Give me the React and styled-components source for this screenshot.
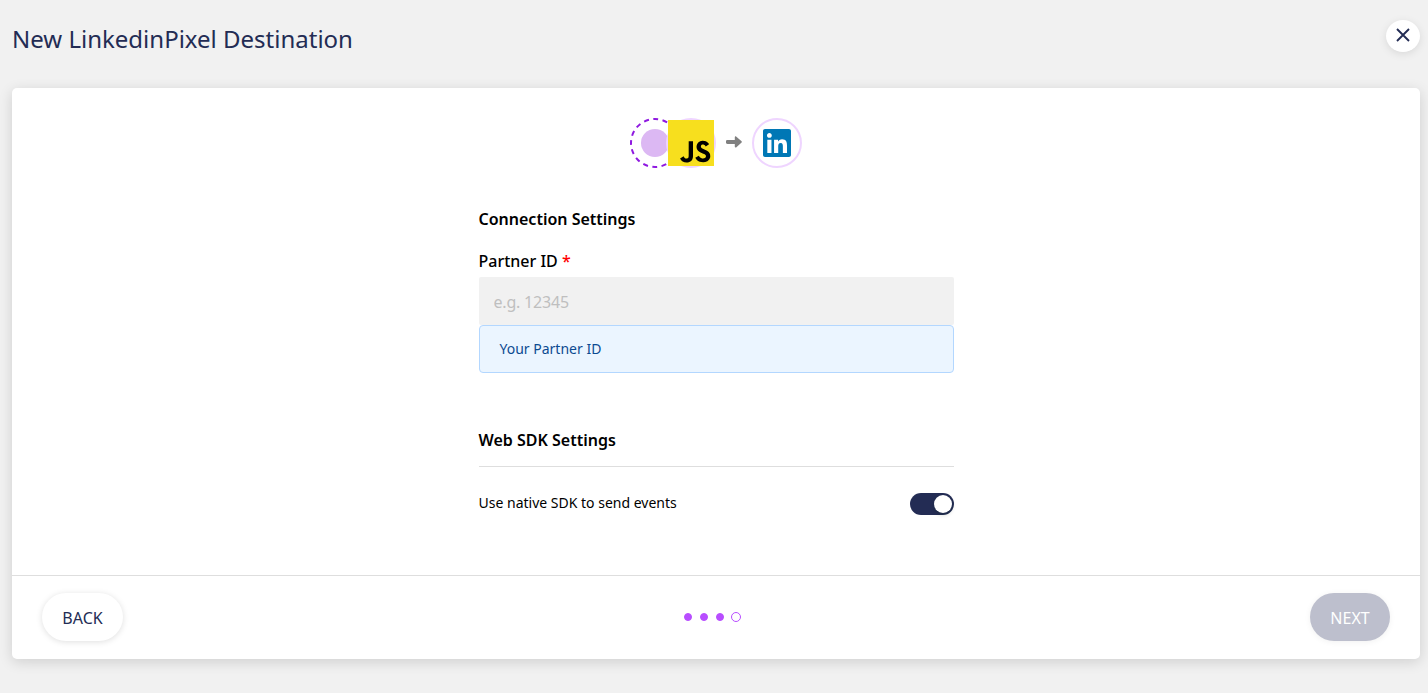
import React, { useState } from "react";
import styled, { createGlobalStyle } from "styled-components";
import { SiJavascript } from "react-icons/si";
import { FaLinkedin } from "react-icons/fa";

const GlobalStyle = createGlobalStyle`
  *, *::before, *::after { box-sizing: border-box; }
  body {
    margin: 0;
    background: #f1f1f1;
    font-family: "Noto Sans", sans-serif;
    color: #000;
    overflow: hidden;
  }
  button, input { font-family: inherit; }
`;

const Page = styled.div`
  height: 693px;
  padding: 0 8px 34px 12px;
  display: flex;
  flex-direction: column;
`;

const Header = styled.header`
  height: 88px;
  flex: none;
  display: flex;
  justify-content: space-between;
  align-items: flex-start;
  padding-top: 20px;
`;

const Title = styled.h1`
  margin: 0;
  font-size: 24px;
  line-height: 38px;
  font-weight: 400;
  color: #232c54;
`;

const CloseButton = styled.button`
  width: 34px;
  height: 32px;
  padding: 0 0 2px;
  border: 0;
  border-radius: 50%;
  background: #fff;
  box-shadow: 0 2px 8px rgba(0, 0, 0, 0.1);
  display: flex;
  align-items: center;
  justify-content: center;
`;

const Card = styled.main`
  flex: 1;
  display: flex;
  flex-direction: column;
  background: #fff;
  border-radius: 5px;
  box-shadow: 0 3px 14px rgba(0, 0, 0, 0.14);
`;

const Body = styled.div`
  flex: 1;
  display: flex;
  flex-direction: column;
  align-items: center;
  padding-top: 30px;
`;

const Flow = styled.div`
  display: flex;
  align-items: center;
  height: 50px;
`;

const Node = styled.div`
  width: 50px;
  height: 50px;
  border: 2px solid #efd5ff;
  border-radius: 50%;
  display: flex;
  align-items: center;
  justify-content: center;
  background: #fff;
  margin-left: ${(p) => p.$shift || 0}px;
`;

const ScriptLogo = styled(SiJavascript)`
  flex: none;
  width: 46px;
  height: 46px;
  color: #f7df1e;
  background: #000;
`;

const LinkedinLogo = styled(FaLinkedin)`
  width: 28px;
  height: 32px;
  color: #0077b5;
`;

const Arrow = styled.svg`
  margin: 0 9px 2px 10px;
`;

const Form = styled.section`
  width: 475px;
  display: flex;
  flex-direction: column;
  margin-top: 38px;
`;

const SectionTitle = styled.h2`
  margin: 0;
  font-size: 16px;
  line-height: 26px;
  font-weight: 600;
`;

const Label = styled.label`
  margin-top: 16px;
  font-size: 16px;
  line-height: 26px;
  font-weight: 500;
`;

const Required = styled.span`
  color: #f00;
`;

const Input = styled.input`
  height: 48px;
  margin-top: 3px;
  padding: 1px 15px 0;
  border: 0;
  border-radius: 2px;
  background: #f1f1f1;
  font-size: 16px;
  letter-spacing: -0.2px;
  &::placeholder { color: #bfbfbf; opacity: 1; }
`;

const Hint = styled.div`
  height: 48px;
  padding: 0 20px;
  border: 1px solid #b3d7ff;
  border-radius: 4px;
  background: #ebf5ff;
  color: #0b4a91;
  font-size: 14px;
  line-height: 46px;
`;

const SdkHeading = styled(SectionTitle)`
  margin-top: 54px;
  padding-bottom: 13px;
  border-bottom: 1px solid #dedede;
`;

const SettingRow = styled.div`
  display: flex;
  justify-content: space-between;
  align-items: flex-start;
  margin-top: 26px;
  font-size: 14px;
  line-height: 20px;
`;

const Switch = styled.button`
  width: 44px;
  height: 22px;
  padding: 2px;
  border: 0;
  border-radius: 11px;
  background: ${(p) => (p.$on ? "#232c54" : "#bfbfbf")};
  display: flex;
  justify-content: ${(p) => (p.$on ? "flex-end" : "flex-start")};
`;

const Knob = styled.span`
  width: 18px;
  height: 18px;
  border-radius: 50%;
  background: #fff;
  box-shadow: 0 2px 4px rgba(0, 35, 11, 0.2);
`;

const Footer = styled.footer`
  height: 84px;
  flex: none;
  display: grid;
  grid-template-columns: 1fr auto 1fr;
  align-items: center;
  padding: 0 30px 2px;
  border-top: 1px solid #dedede;
`;

const PillButton = styled.button`
  width: ${(p) => p.$width}px;
  height: 48px;
  padding: 2px 0 0;
  border: 0;
  border-radius: 24px;
  font-size: 16px;
  justify-self: ${(p) => (p.$end ? "end" : "start")};
  color: ${(p) => (p.$muted ? "#fff" : "#232c54")};
  background: ${(p) => (p.$muted ? "#bdbfcd" : "#fff")};
  box-shadow: 0 1px 6px rgba(0, 0, 0, ${(p) => (p.$muted ? 0.06 : 0.13)});
`;

const Steps = styled.div`
  display: flex;
  align-items: center;
  gap: 8px;
  margin-right: 7px;
`;

const Dot = styled.span`
  width: ${(p) => (p.$open ? 10 : 8)}px;
  height: ${(p) => (p.$open ? 10 : 8)}px;
  margin-left: ${(p) => (p.$open ? -1 : 0)}px;
  border-radius: 50%;
  border: 1px solid #b84dff;
  background: ${(p) => (p.$open ? "#fff" : "#b84dff")};
`;

export default function App() {
  const [native, setNative] = useState(true);
  return (
    <>
      <GlobalStyle />
      <Page>
        <Header>
          <Title>New LinkedinPixel Destination</Title>
          <CloseButton aria-label="Close">
            <svg width="14" height="14" viewBox="0 0 14 14" stroke="#232c54" strokeWidth="1.9">
              <path d="M1 1l12 12M13 1L1 13" />
            </svg>
          </CloseButton>
        </Header>
        <Card>
          <Body>
            <Flow>
              <svg width="50" height="50" viewBox="0 0 50 50">
                <circle cx="25" cy="25" r="24" fill="#fff" stroke="#8f1ae0" strokeWidth="2" strokeDasharray="5 4.425" strokeDashoffset="2.5" />
                <circle cx="25" cy="25" r="14" fill="#dcb8f3" />
              </svg>
              <Node $shift={-14}>
                <ScriptLogo />
              </Node>
              <Arrow width="17" height="12" viewBox="0 0 17 12" fill="#808080">
                <path d="M1.5 4.1h7.300V1.200c0-.8.8-1.100 1.300-.6l5.500 4.700c.4.4.4.9 0 1.300l-5.500 4.800c-.5.5-1.300.1-1.300-.6V7.900H1.500C.6 7.900 0 7.500 0 6.800V5.200c0-.7.6-1.100 1.500-1.100z" />
              </Arrow>
              <Node>
                <LinkedinLogo />
              </Node>
            </Flow>
            <Form>
              <SectionTitle>Connection Settings</SectionTitle>
              <Label htmlFor="partner">
                Partner ID <Required>*</Required>
              </Label>
              <Input id="partner" placeholder="e.g. 12345" />
              <Hint>Your Partner ID</Hint>
              <SdkHeading>Web SDK Settings</SdkHeading>
              <SettingRow>
                <span>Use native SDK to send events</span>
                <Switch $on={native} role="switch" aria-checked={native} onClick={() => setNative(!native)}>
                  <Knob />
                </Switch>
              </SettingRow>
            </Form>
          </Body>
          <Footer>
            <PillButton $width={81}>BACK</PillButton>
            <Steps>
              <Dot />
              <Dot />
              <Dot />
              <Dot $open />
            </Steps>
            <PillButton $width={80} $muted $end>NEXT</PillButton>
          </Footer>
        </Card>
      </Page>
    </>
  );
}
